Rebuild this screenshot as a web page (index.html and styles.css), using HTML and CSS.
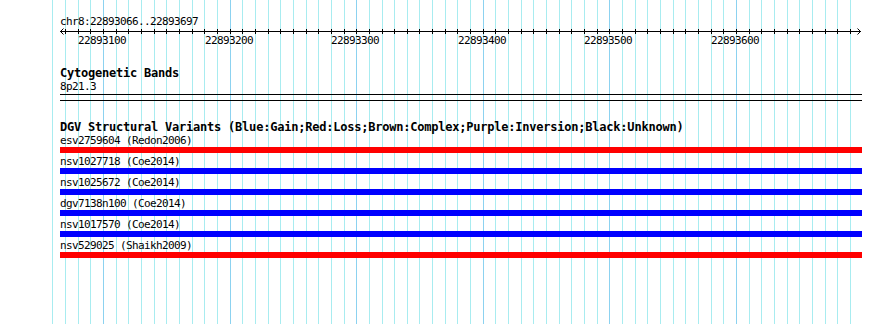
FILE: index.html
```html
<!DOCTYPE html>
<html lang="en">
<head>
  <meta charset="UTF-8">
  <title>chr8:22893066..22893697</title>
  <link rel="stylesheet" href="styles.css">
</head>
<body>
  <div class="panel">
    <!-- grid behind all tracks -->
    <svg class="grid" id="grid" width="890" height="324"></svg>

    <div class="tracks">
      <div class="locus">chr8:22893066..22893697</div>

      <div class="ruler">
        <svg class="ruler-axis" id="rulerAxis" width="802" height="8">
          <line x1="0" y1="3.5" x2="801" y2="3.5" stroke="#000"/>
          <polyline points="3.5,0.5 0.5,3.5 3.5,6.5" fill="none" stroke="#000"/>
          <polyline points="797.5,0.5 800.5,3.5 797.5,6.5" fill="none" stroke="#000"/>
        </svg>
        <div class="ruler-labels" id="rulerLabels"></div>
      </div>

      <div class="track cyto">
        <div class="track-title">Cytogenetic Bands</div>
        <div class="label">8p21.3</div>
        <div class="band"></div>
      </div>

      <div class="track dgv">
        <div class="track-title">DGV Structural Variants (Blue:Gain;Red:Loss;Brown:Complex;Purple:Inversion;Black:Unknown)</div>
        <div class="feature">
          <div class="label">esv2759604 (Redon2006)</div>
          <div class="bar loss"></div>
        </div>
        <div class="feature">
          <div class="label">nsv1027718 (Coe2014)</div>
          <div class="bar gain"></div>
        </div>
        <div class="feature">
          <div class="label">nsv1025672 (Coe2014)</div>
          <div class="bar gain"></div>
        </div>
        <div class="feature">
          <div class="label">dgv7138n100 (Coe2014)</div>
          <div class="bar gain"></div>
        </div>
        <div class="feature">
          <div class="label">nsv1017570 (Coe2014)</div>
          <div class="bar gain"></div>
        </div>
        <div class="feature">
          <div class="label">nsv529025 (Shaikh2009)</div>
          <div class="bar loss"></div>
        </div>
      </div>
    </div>
  </div>

  <script>
    // scale: 632 bp over 800 px, starting at x = 60
    const START = 22893066;
    const X0 = 60;
    const PX = 800 / 632;
    const NS = "http://www.w3.org/2000/svg";

    function xOf(bp) {
      return Math.round(X0 + (bp - START) * PX);
    }

    function addLine(svg, x1, y1, x2, y2, cls) {
      const l = document.createElementNS(NS, "line");
      l.setAttribute("x1", x1);
      l.setAttribute("y1", y1);
      l.setAttribute("x2", x2);
      l.setAttribute("y2", y2);
      l.setAttribute("class", cls);
      svg.appendChild(l);
    }

    // grid lines every 10 bp, darker every 100 bp
    const grid = document.getElementById("grid");
    for (let bp = 22893060; bp <= 22893690; bp += 10) {
      const x = xOf(bp) + 0.5;
      addLine(grid, x, 0, x, 324, bp % 100 === 0 ? "major" : "minor");
    }

    // ticks on the ruler
    const axis = document.getElementById("rulerAxis");
    for (let bp = 22893070; bp <= 22893690; bp += 10) {
      const x = xOf(bp) - X0 + 0.5;
      addLine(axis, x, 1, x, 6, "tick");
    }

    // tick labels
    const labels = document.getElementById("rulerLabels");
    for (let bp = 22893100; bp <= 22893600; bp += 100) {
      const s = document.createElement("span");
      s.className = "tick-label";
      s.textContent = bp;
      s.style.left = (xOf(bp) - X0 - 25) + "px";
      labels.appendChild(s);
    }
  </script>
</body>
</html>
```

FILE: styles.css
```css
* { box-sizing: border-box; }
body {
  margin: 0;
  background-color: #fff;
  color: #000;
  font-family: "DejaVu Sans Mono", "Liberation Mono", monospace;
  font-size: 11px;
  letter-spacing: -0.62px;
}
.panel {
  position: relative;
  width: 890px;
  height: 324px;
  overflow: hidden;
}
.grid {
  position: absolute;
  top: 0;
  left: 0;
}
.grid .minor { stroke: #a8ecf0; stroke-width: 1; }
.grid .major { stroke: #8cd2f0; stroke-width: 1; }

.tracks {
  position: relative;
  padding-left: 60px;
}
.locus {
  padding-top: 15px;
  height: 28px;
  line-height: 13px;
  white-space: nowrap;
}
.ruler {
  position: relative;
  height: 22px;
}
.ruler-axis {
  display: block;
  overflow: visible;
}
.ruler-axis .tick { stroke: #000; stroke-width: 1; }
.ruler-labels {
  position: absolute;
  top: 6px;
  left: 0;
}
.tick-label {
  position: absolute;
  top: 0;
  line-height: 13px;
  white-space: nowrap;
}

.track-title {
  font-weight: bold;
  font-size: 12px;
  letter-spacing: -0.22px;
  line-height: 12px;
  height: 12px;
  white-space: nowrap;
}
.label {
  line-height: 12px;
  height: 12px;
  white-space: nowrap;
}
.cyto {
  margin-top: 17px;
}
.cyto .label {
  margin-top: 2px;
}
.band {
  margin-top: 1px;
  width: 802px;
  height: 7px;
  border-top: 1px solid #000;
  border-bottom: 1px solid #000;
}
.dgv {
  margin-top: 20px;
}
.dgv .track-title {
  margin-bottom: 2px;
}
.feature {
  margin-bottom: 3px;
}
.bar {
  width: 802px;
  height: 6px;
}
.bar.loss { background-color: #ff0000; }
.bar.gain { background-color: #0000ff; }
```
